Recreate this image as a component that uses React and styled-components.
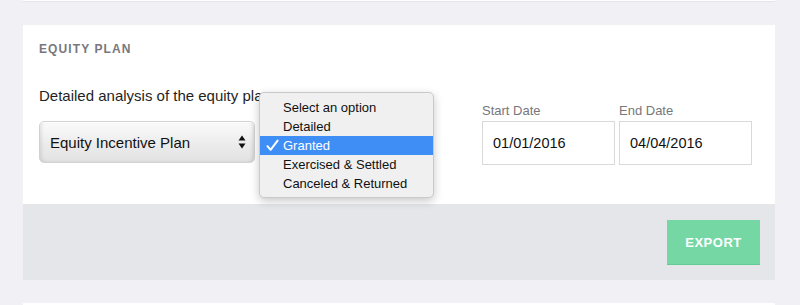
import React, { useState } from 'react';
import styled, { createGlobalStyle } from 'styled-components';

const GlobalStyle = createGlobalStyle`
  body {
    margin: 0;
    background: #f1f0f5;
    font-family: "Liberation Sans", Arial, sans-serif;
    color: #1f1f24;
  }
`;

const Page = styled.div`
  display: flex;
  flex-direction: column;
  gap: 23px;
  padding: 0 25px 0 23px;
`;

const CardStub = styled.div`
  height: 1px;
  background: #fff;
  border-bottom: 1px solid #e4e4ea;
`;

const Card = styled.section`
  background: #fff;
`;

const Body = styled.div`
  padding: 16px 23px 39px 16px;
`;

const Title = styled.h3`
  margin: 0;
  font-size: 12px;
  line-height: 16px;
  font-weight: 700;
  letter-spacing: 1.1px;
  color: #77777d;
`;

const Row = styled.div`
  display: flex;
  align-items: flex-end;
  margin-top: 29px;
`;

const PlanColumn = styled.div`
  width: 216px;
  position: relative;
`;

const Description = styled.div`
  font-size: 15px;
  line-height: 20px;
  white-space: nowrap;
  margin-bottom: 15px;
`;

const SelectBox = styled.div`
  height: 40px;
  margin-bottom: 2px;
  display: flex;
  align-items: center;
  justify-content: space-between;
  padding: 0 8px 0 10px;
  border: 1px solid #d2d2d2;
  border-radius: 5px;
  background: linear-gradient(#fbfbfb, #ececec 55%, #e2e2e2);
  box-shadow: inset 0 1px 0 #fff, inset 3px 0 4px -2px rgba(0, 0, 0, 0.12),
    inset -3px 0 4px -2px rgba(0, 0, 0, 0.12);
  font-size: 15px;
  color: #111;
`;

const Menu = styled.ul`
  position: absolute;
  left: 220px;
  top: 6px;
  width: 175px;
  margin: 0;
  padding: 5px 0 4px;
  list-style: none;
  background: #f0f0f0;
  border: 1px solid #c9c9c9;
  border-radius: 5px;
  box-shadow: 0 3px 10px rgba(0, 0, 0, 0.22);
  box-sizing: border-box;
  z-index: 2;
`;

const MenuItem = styled.li`
  position: relative;
  height: 19px;
  line-height: 19px;
  padding-left: 23px;
  font-size: 13px;
  color: ${(p) => (p.$active ? '#fff' : '#111')};
  background: ${(p) => (p.$active ? '#3f8ef6' : 'transparent')};
`;

const Check = styled.svg`
  position: absolute;
  left: 6px;
  top: 3px;
`;

const Dates = styled.div`
  display: flex;
  gap: 4px;
  margin-left: auto;
`;

const DateField = styled.label`
  display: flex;
  flex-direction: column;
  gap: 2px;
`;

const DateLabel = styled.span`
  font-size: 13px;
  line-height: 16px;
  color: #76767c;
`;

const DateInput = styled.input`
  width: 133px;
  height: 44px;
  box-sizing: border-box;
  border: 1px solid #d9d9d9;
  padding: 0 10px;
  font-family: inherit;
  font-size: 14.5px;
  color: #111;
  outline: none;
`;

const Footer = styled.div`
  height: 76px;
  background: #e5e6ea;
  display: flex;
  justify-content: flex-end;
  align-items: flex-start;
  padding: 16px 15px 0 0;
  box-sizing: border-box;
`;

const ExportButton = styled.button`
  width: 93px;
  height: 45px;
  border: none;
  border-bottom: 1px solid #66cc95;
  background: #74d7a4;
  color: #fff;
  font-family: inherit;
  font-weight: 700;
  font-size: 13px;
  letter-spacing: 0.5px;
  cursor: pointer;
`;

const NextCard = styled.div`
  height: 10px;
  background: #fff;
`;

const options = ['Select an option', 'Detailed', 'Granted', 'Exercised & Settled', 'Canceled & Returned'];

function Arrows() {
  return (
    <svg width="8" height="14" viewBox="0 0 8 14">
      <path d="M4 0.5 L7.5 5.5 H0.5 Z" fill="#111" />
      <path d="M4 13.5 L7.5 8.5 H0.5 Z" fill="#111" />
    </svg>
  );
}

export default function App() {
  const [selected] = useState('Granted');
  return (
    <>
      <GlobalStyle />
      <Page>
        <CardStub />
        <Card>
          <Body>
            <Title>EQUITY PLAN</Title>
            <Row>
              <PlanColumn>
                <Description>Detailed analysis of the equity plan</Description>
                <SelectBox>
                  Equity Incentive Plan
                  <Arrows />
                </SelectBox>
                <Menu>
                  {options.map((o) => (
                    <MenuItem key={o} $active={o === selected}>
                      {o === selected && (
                        <Check width="13" height="13" viewBox="0 0 13 13">
                          <path
                            d="M1.5 7.2 L4.6 10.8 L11.6 1.6"
                            fill="none"
                            stroke="#fff"
                            strokeWidth="2"
                            strokeLinecap="round"
                            strokeLinejoin="round"
                          />
                        </Check>
                      )}
                      {o}
                    </MenuItem>
                  ))}
                </Menu>
              </PlanColumn>
              <Dates>
                <DateField>
                  <DateLabel>Start Date</DateLabel>
                  <DateInput defaultValue="01/01/2016" />
                </DateField>
                <DateField>
                  <DateLabel>End Date</DateLabel>
                  <DateInput defaultValue="04/04/2016" />
                </DateField>
              </Dates>
            </Row>
          </Body>
          <Footer>
            <ExportButton>EXPORT</ExportButton>
          </Footer>
        </Card>
        <NextCard />
      </Page>
    </>
  );
}
